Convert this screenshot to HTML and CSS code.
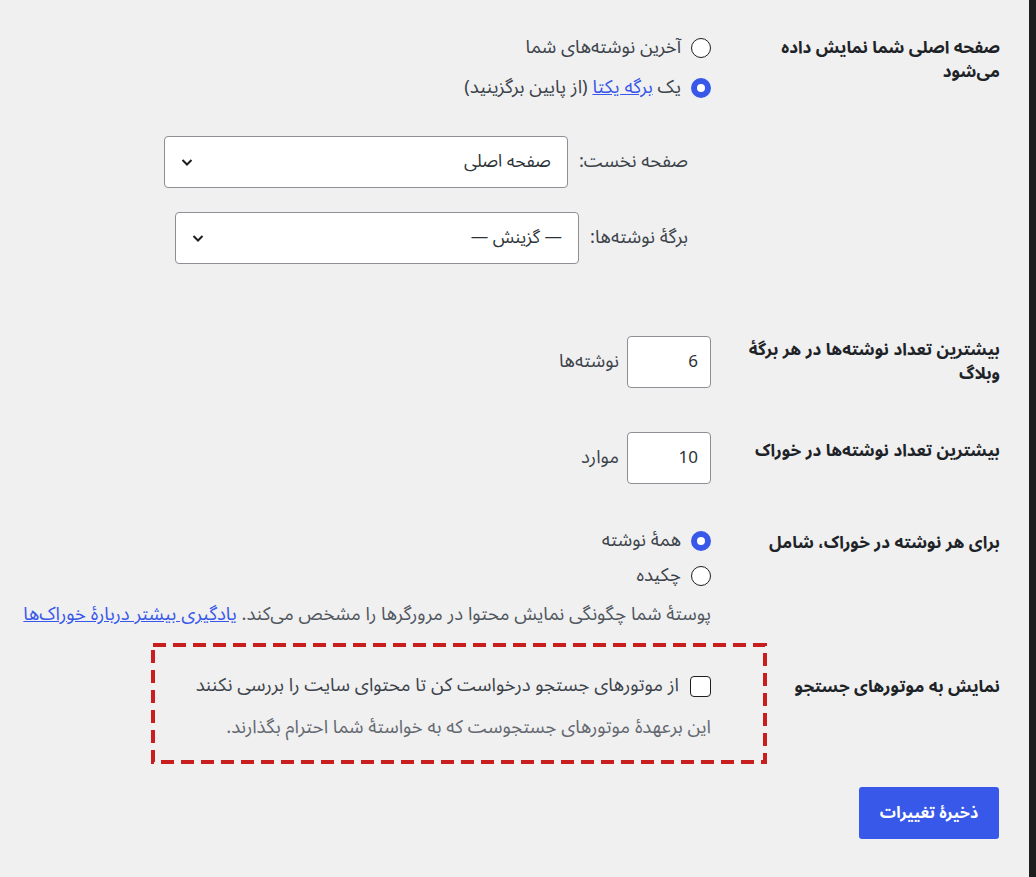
FILE: index.html
```html
<!DOCTYPE html>
<html lang="fa" dir="rtl">
<head>
<meta charset="utf-8">
<title>تنظیمات خواندن</title>
<link rel="stylesheet" href="styles.css">
</head>
<body>
<div class="screen">
  <aside class="menu-edge"></aside>
  <main class="content">
    <form class="settings">
      <div class="row row-front">
        <div class="th">صفحه اصلی شما نمایش داده می‌شود</div>
        <div class="td">
          <label class="radio-line"><span class="radio"></span><span>آخرین نوشته‌های شما</span></label>
          <label class="radio-line second"><span class="radio checked"></span><span>یک <a class="link" href="#">برگه یکتا</a> (از پایین برگزینید)</span></label>
          <ul class="page-selects">
            <li class="sel-row"><span class="sel-label">صفحه نخست:</span><span class="select"><span>صفحه اصلی</span><svg class="chev" viewBox="0 0 16 16" width="16" height="16"><path d="M3.5 6l4.5 4.5L12.5 6" fill="none" stroke="#1e1e1e" stroke-width="2"/></svg></span></li>
            <li class="sel-row second"><span class="sel-label">برگهٔ نوشته‌ها:</span><span class="select"><span>— گزینش —</span><svg class="chev" viewBox="0 0 16 16" width="16" height="16"><path d="M3.5 6l4.5 4.5L12.5 6" fill="none" stroke="#1e1e1e" stroke-width="2"/></svg></span></li>
          </ul>
        </div>
      </div>

      <div class="row row-posts">
        <div class="th">بیشترین تعداد نوشته‌ها در هر برگهٔ وبلاگ</div>
        <div class="td inline-field"><span class="num">6</span><span>نوشته‌ها</span></div>
      </div>

      <div class="row row-feed">
        <div class="th">بیشترین تعداد نوشته‌ها در خوراک</div>
        <div class="td inline-field"><span class="num">10</span><span>موارد</span></div>
      </div>

      <div class="row row-content">
        <div class="th">برای هر نوشته در خوراک، شامل</div>
        <div class="td">
          <label class="radio-line tight"><span class="radio checked"></span><span>همهٔ نوشته</span></label>
          <label class="radio-line tight"><span class="radio"></span><span>چکیده</span></label>
          <p class="description">پوستهٔ شما چگونگی نمایش محتوا در مرورگرها را مشخص می‌کند. <a class="link" href="#">یادگیری بیشتر دربارهٔ خوراک‌ها</a></p>
        </div>
      </div>

      <div class="row row-search">
        <div class="th">نمایش به موتورهای جستجو</div>
        <div class="td">
          <div class="highlight">
            <svg class="dash-frame" width="616" height="121" viewBox="0 0 616 121"><rect x="2" y="2" width="612" height="117" fill="none" stroke="#c81e1e" stroke-width="4" stroke-dasharray="13 7"/></svg>
            <label class="check-line"><span class="checkbox"></span><span>از موتورهای جستجو درخواست کن تا محتوای سایت را بررسی نکنند</span></label>
            <p class="note">این برعهدهٔ موتورهای جستجوست که به خواستهٔ شما احترام بگذارند.</p>
          </div>
        </div>
      </div>

      <div class="submit-row"><button type="button" class="button-primary">ذخیرهٔ تغییرات</button></div>
    </form>
  </main>
</div>
</body>
</html>
```

FILE: styles.css
```css
html, body {
  margin: 0;
  padding: 0;
}

body {
  background: #f0f0f1;
  font-family: "Noto Sans Arabic", "Noto Sans", "DejaVu Sans", sans-serif;
  direction: rtl;
  color: #3c434a;
}

.screen {
  display: flex;
  min-height: 877px;
}

.menu-edge {
  flex: 0 0 7px;
  background: #1e1e1e;
}

.content {
  flex: 1;
  padding-right: 29px;
}

.settings {
  margin: 0;
}

.row {
  display: grid;
  grid-template-columns: 275px 1fr;
  align-items: start;
}

.th {
  padding-left: 13px;
  font-size: 17px;
  line-height: 24px;
  font-weight: 700;
  color: #1d2327;
}

.td {
  padding-right: 14px;
  padding-left: 13px;
  font-size: 18.5px;
  line-height: 24px;
  color: #3c434a;
}

/* row 1 */
.row-front .th { padding-top: 36px; }
.row-front .td { padding-top: 36px; }

.radio-line {
  display: flex;
  align-items: center;
  gap: 10px;
  height: 24px;
}
.radio-line.second { margin-top: 16px; }
.radio-line.tight { height: 35px; }

.radio {
  flex: none;
  width: 20px;
  height: 20px;
  box-sizing: border-box;
  border-radius: 50%;
  border: 1.5px solid #1e1e1e;
  background: #fff;
}
.radio.checked {
  border: 6px solid #3858e9;
}

.link {
  color: #3858e9;
  text-decoration: underline;
}

.page-selects {
  list-style: none;
  margin: 36px 23px 0 0;
  padding: 0;
}

.sel-row {
  display: flex;
  align-items: center;
  gap: 11px;
  height: 52px;
}
.sel-row.second { margin-top: 24px; }

.sel-label {
  color: #3c434a;
}

.select {
  width: 404px;
  height: 52px;
  box-sizing: border-box;
  border: 1px solid #8c8f94;
  border-radius: 4px;
  background: #fff;
  display: flex;
  align-items: center;
  justify-content: space-between;
  padding: 0 16px 0 14px;
  color: #2c3338;
  font-size: 17.5px;
}

.chev { flex: none; }

/* numeric rows */
.inline-field {
  display: flex;
  align-items: center;
  gap: 8px;
}

.num {
  width: 84px;
  height: 52px;
  box-sizing: border-box;
  border: 1px solid #8c8f94;
  border-radius: 4px;
  background: #fff;
  display: flex;
  align-items: center;
  padding-right: 12px;
  font-size: 17px;
  color: #2c3338;
}

.row-posts { margin-top: 72px; }
.row-posts .th { padding-top: 2px; }

.row-feed { margin-top: 44px; }
.row-feed .th { padding-top: 7px; }

.row-content { margin-top: 39px; }
.row-content .th { padding-top: 8px; }

.description {
  margin: 10px 0 0 0;
  color: #50575e;
  line-height: 24px;
}

/* search engine row */
.row-search { margin-top: 16px; }
.row-search .th { padding-top: 32px; }

.highlight {
  position: relative;
  margin-right: -56px;
  width: 616px;
  height: 121px;
  box-sizing: border-box;
  padding: 31px 56px 0 0;
}

.dash-frame {
  position: absolute;
  top: 0;
  left: 0;
}

.check-line {
  display: flex;
  align-items: center;
  gap: 11px;
  height: 24px;
}

.checkbox {
  flex: none;
  width: 21px;
  height: 21px;
  box-sizing: border-box;
  border: 1.5px solid #1e1e1e;
  border-radius: 4px;
  background: #fff;
}

.note {
  margin: 18px 0 0 0;
  color: #646970;
}

.submit-row {
  margin-top: 23px;
  display: flex;
}

.button-primary {
  width: 140px;
  height: 52px;
  border: none;
  border-radius: 3px;
  background: #3858e9;
  color: #fff;
  font-family: inherit;
  font-size: 16px;
  font-weight: 700;
  margin-right: 1px;
}
```
